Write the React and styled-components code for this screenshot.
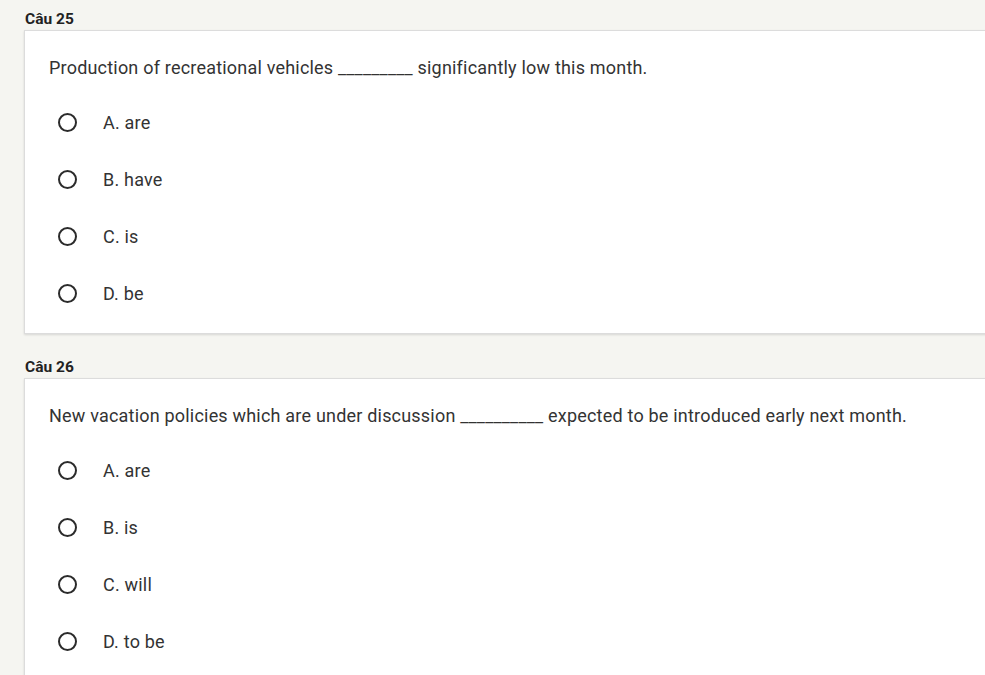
import React from "react";
import styled, { createGlobalStyle } from "styled-components";

const GlobalStyle = createGlobalStyle`
  html, body {
    margin: 0;
    padding: 0;
    background: #f5f5f1;
    overflow: hidden;
  }
  body {
    font-family: Roboto, "Liberation Sans", Arial, sans-serif;
    color: #333333;
  }
`;

const questions = [
  {
    no: 25,
    text: "Production of recreational vehicles _________ significantly low this month.",
    options: ["A. are", "B. have", "C. is", "D. be"],
  },
  {
    no: 26,
    text: "New vacation policies which are under discussion __________ expected to be introduced early next month.",
    options: ["A. are", "B. is", "C. will", "D. to be"],
  },
];

function App() {
  return (
    <>
      <GlobalStyle />
      <Page>
        {questions.map((q) => (
          <Section key={q.no}>
            <Title>Câu {q.no}</Title>
            <Card>
              <Question>{q.text}</Question>
              <Options>
                {q.options.map((o) => (
                  <Option key={o}>
                    <Radio />
                    <Label>{o}</Label>
                  </Option>
                ))}
              </Options>
            </Card>
          </Section>
        ))}
      </Page>
    </>
  );
}

export default App;

const Page = styled.div`
  padding: 11px 0 0 24px;
  width: 1100px;
`;

const Section = styled.section`
  margin-bottom: 25px;
`;

const Title = styled.div`
  font-size: 15.5px;
  font-weight: 700;
  line-height: 16px;
  color: #222222;
  padding-left: 1px;
  margin-bottom: 3px;
`;

const Card = styled.div`
  background: #ffffff;
  border: 1px solid #dcdcdc;
  box-shadow: 0 1px 2px rgba(0, 0, 0, 0.12);
  padding: 25px 0 11px 24px;
`;

const Question = styled.div`
  font-size: 18px;
  letter-spacing: 0.2px;
  line-height: 24px;
  color: #333333;
  margin-bottom: 14px;
`;

const Options = styled.div`
  display: flex;
  flex-direction: column;
`;

const Option = styled.label`
  display: flex;
  align-items: center;
  height: 57px;
  padding-left: 9px;
`;

const Radio = styled.span`
  width: 15px;
  height: 15px;
  border: 2px solid #2b2b2b;
  border-radius: 50%;
  flex-shrink: 0;
`;

const Label = styled.span`
  margin-left: 26px;
  font-size: 18px;
  letter-spacing: 0.2px;
  color: #333333;
`;
